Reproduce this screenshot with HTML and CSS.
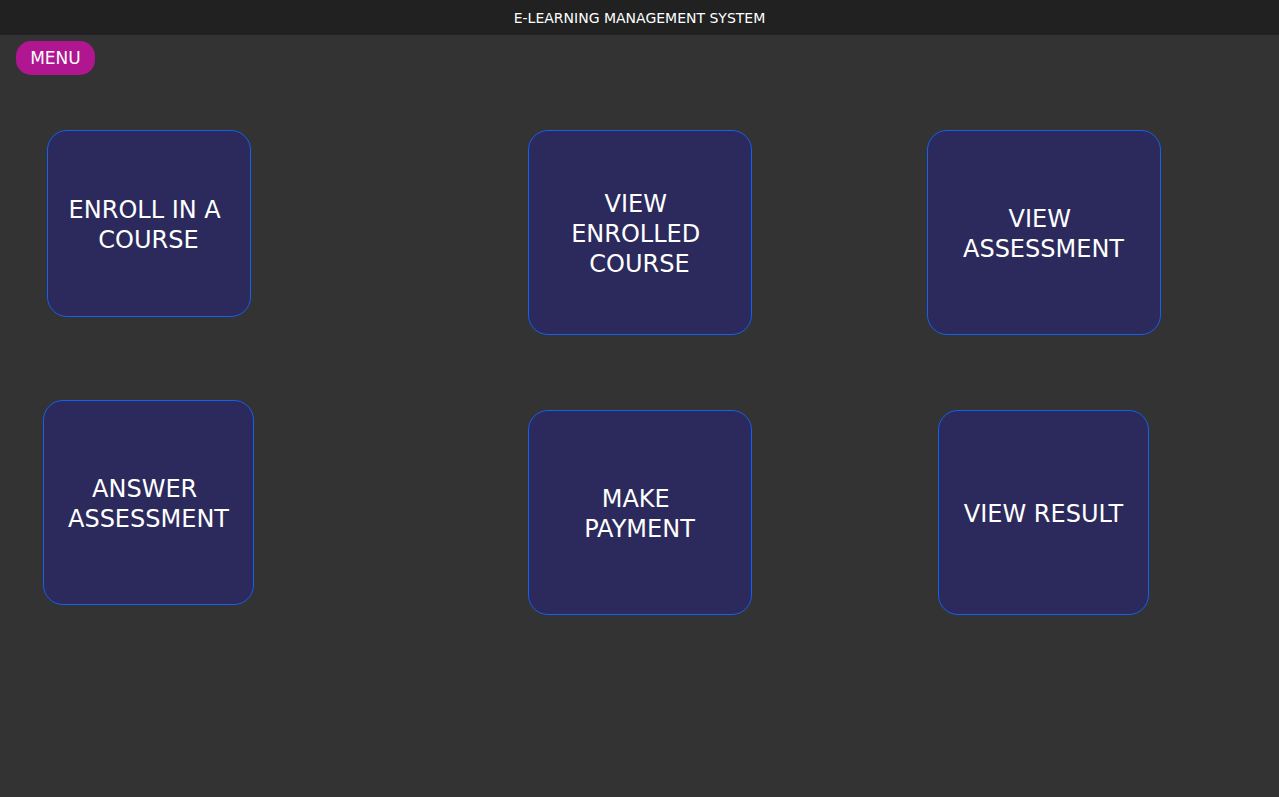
FILE: index.html
```html
<!DOCTYPE html>
<html lang="en">
<head>
<meta charset="utf-8">
<title>E-Learning Management System</title>
<link rel="stylesheet" href="styles.css">
</head>
<body>
<header class="topbar">E-LEARNING MANAGEMENT SYSTEM</header>
<div class="toolbar"><button class="menu-btn">MENU</button></div>
<main class="grid">
  <div class="cell"><div class="card card-enroll">ENROLL IN A COURSE</div></div>
  <div class="cell"><div class="card card-w223">VIEW ENROLLED COURSE</div></div>
  <div class="cell"><div class="card card-w233">VIEW ASSESSMENT</div></div>
  <div class="cell"><div class="card card-w210 card-raised">ANSWER ASSESSMENT</div></div>
  <div class="cell"><div class="card card-w223">MAKE PAYMENT</div></div>
  <div class="cell"><div class="card card-w210">VIEW RESULT</div></div>
</main>
</body>
</html>
```
FILE: styles.css
```css
html, body {
  margin: 0;
  padding: 0;
}
body {
  background: #333333;
  color: #ffffff;
  font-family: "DejaVu Sans", sans-serif;
  min-height: 797px;
}
.topbar {
  height: 35px;
  background: #212121;
  display: flex;
  align-items: center;
  justify-content: center;
  font-size: 14px;
  color: #ffffff;
}
.toolbar {
  padding: 6px 16px 0;
  height: 34px;
}
.menu-btn {
  height: 34px;
  width: 79px;
  padding: 0;
  border: none;
  border-radius: 15px;
  background: #b0168f;
  color: #ffffff;
  font-family: "DejaVu Sans", sans-serif;
  font-size: 17px;
}
.grid {
  display: grid;
  grid-template-columns: 261px 230px 261px 143px 261px;
  grid-auto-rows: 280px;
  padding: 55px 0 0 18px;
}
.cell {
  display: flex;
  justify-content: center;
  align-items: flex-start;
}
.cell:nth-child(3n+1) { grid-column: 1; }
.cell:nth-child(3n+2) { grid-column: 3; }
.cell:nth-child(3n) { grid-column: 5; }
.card {
  box-sizing: border-box;
  height: 205px;
  padding: 2px 20px 0;
  display: flex;
  align-items: center;
  justify-content: center;
  text-align: center;
  white-space: break-spaces;
  background: #2c2a5c;
  border: 1px solid #1560ee;
  border-radius: 20px;
  font-size: 24px;
  line-height: 30px;
  color: #ffffff;
}
.card-enroll { width: 204px; height: 187px; }
.card-w223 { width: 224px; }
.card-w233 { width: 234px; }
.card-w210 { width: 211px; }
.card-raised { margin-top: -10px; }
```
